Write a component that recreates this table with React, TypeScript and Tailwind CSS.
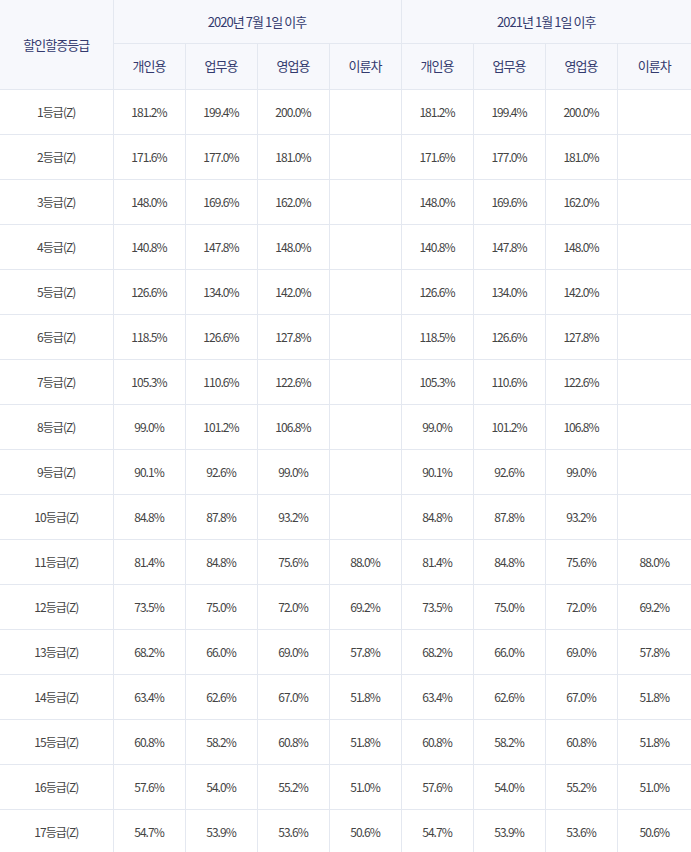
import React from 'react';

type Row = { grade: string; a: string[]; b: string[] };

const rows: Row[] = [
  ['181.2%', '199.4%', '200.0%', ''],
  ['171.6%', '177.0%', '181.0%', ''],
  ['148.0%', '169.6%', '162.0%', ''],
  ['140.8%', '147.8%', '148.0%', ''],
  ['126.6%', '134.0%', '142.0%', ''],
  ['118.5%', '126.6%', '127.8%', ''],
  ['105.3%', '110.6%', '122.6%', ''],
  ['99.0%', '101.2%', '106.8%', ''],
  ['90.1%', '92.6%', '99.0%', ''],
  ['84.8%', '87.8%', '93.2%', ''],
  ['81.4%', '84.8%', '75.6%', '88.0%'],
  ['73.5%', '75.0%', '72.0%', '69.2%'],
  ['68.2%', '66.0%', '69.0%', '57.8%'],
  ['63.4%', '62.6%', '67.0%', '51.8%'],
  ['60.8%', '58.2%', '60.8%', '51.8%'],
  ['57.6%', '54.0%', '55.2%', '51.0%'],
  ['54.7%', '53.9%', '53.6%', '50.6%'],
].map((v, i) => ({ grade: `${i + 1}등급(Z)`, a: v, b: v }));

const kinds = ['개인용', '업무용', '영업용', '이륜차'];

const th = 'border-b border-r border-[#e4e8f0] bg-[#f7f8fc] text-center font-normal text-[13px] text-[#333a6e]';
const td = 'h-[45px] border-b border-r border-[#e4e8f0] text-center text-[12px] text-[#444]';

export default function App() {
  return (
    <div className="w-[691px] bg-white tracking-[-0.06em]" style={{ fontFamily: '"Noto Sans CJK KR", "Noto Sans", sans-serif' }}>
      <table className="w-full table-fixed border-collapse">
        <colgroup>
          <col className="w-[113px]" />
          {Array.from({ length: 7 }).map((_, i) => (
            <col key={i} className="w-[72px]" />
          ))}
          <col />
        </colgroup>
        <thead>
          <tr className="h-[43px]">
            <th rowSpan={2} className={th}>할인할증등급</th>
            <th colSpan={4} className={th}>2020년 7월 1일 이후</th>
            <th colSpan={4} className={`${th} border-r-0`}>2021년 1월 1일 이후</th>
          </tr>
          <tr className="h-[46px]">
            {[...kinds, ...kinds].map((k, i) => (
              <th key={i} className={`${th} ${i === 7 ? 'border-r-0' : ''}`}>{k}</th>
            ))}
          </tr>
        </thead>
        <tbody>
          {rows.map((r) => (
            <tr key={r.grade}>
              <td className={td}>{r.grade}</td>
              {[...r.a, ...r.b].map((v, i) => (
                <td key={i} className={`${td} ${i === 7 ? 'border-r-0' : ''}`}>{v}</td>
              ))}
            </tr>
          ))}
        </tbody>
      </table>
    </div>
  );
}
